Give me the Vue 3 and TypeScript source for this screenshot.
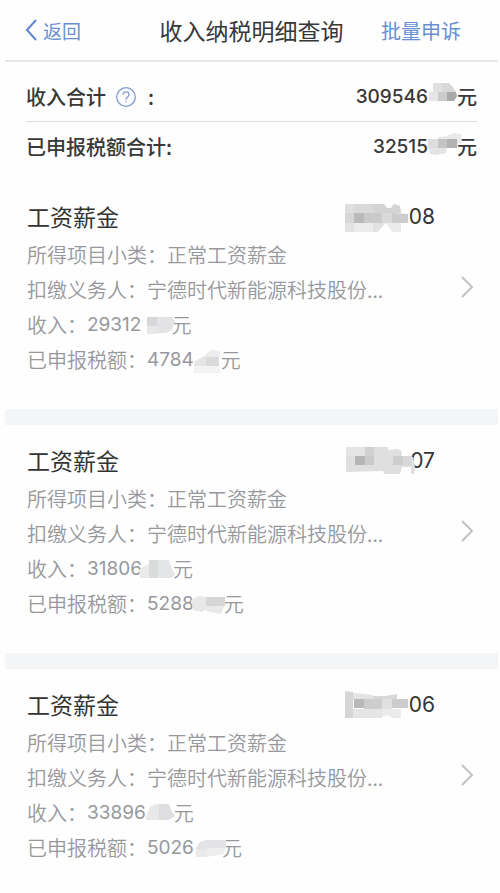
<script setup lang="ts">
type Cell = [points: string, fill: string]

interface Mask {
  width: number
  cells: Cell[]
}

interface Amount {
  digits: string
  mask: Mask
}

interface TaxRecord {
  month: string
  monthMask: Mask
  income: Amount
  tax: Amount
}

const totalIncome: Amount = {
  digits: '309546',
  mask: {
    width: 29,
    cells: [
      ['5,11 14,11 14,20 5,20', '#e0e0e0'],
      ['14,11 21,11 24,14 28,20 14,20', '#d8d8d8'],
      ['1,20 10,20 10,29 1,29', '#e6e6e6'],
      ['10,20 19,20 19,29 10,29', '#cbcbcb'],
      ['19,20 28,20 29,24 26,29 19,29', '#a9a9a9'],
    ],
  },
}

const totalTax: Amount = {
  digits: '32515',
  mask: {
    width: 29,
    cells: [
      ['10,15 19,14 26,11 33,12 34,20 28,24 10,18', '#e9e9e9'],
      ['0,17 10,17 10,26 0,26', '#dddddd'],
      ['10,17 19,17 19,26 10,26', '#c4c4c4'],
      ['19,17 29,17 29,26 19,26', '#b2b2b2'],
      ['1,26 19,26 18,31 8,33 2,32', '#e4e4e4'],
    ],
  },
}

const category = '正常工资薪金'
const employer = '宁德时代新能源科技股份...'

const records: TaxRecord[] = [
  {
    month: '08',
    monthMask: {
      width: 64,
      cells: [
        ['0,8 9,8 9,17 0,17', '#dfdfdf'],
        ['9,8 28,8 28,17 9,17', '#d9d9d9'],
        ['28,8 39,8 42,12 46,12 49,8 55,10 56,17 28,17', '#d3d3d3'],
        ['0,17 9,17 9,27 0,27', '#d6d6d6'],
        ['9,17 19,17 19,27 9,27', '#bababa'],
        ['19,17 37,17 37,27 19,27', '#cacaca'],
        ['37,17 47,17 47,27 37,27', '#dadada'],
        ['47,17 63,18 63,27 47,27', '#cccccc'],
        ['0,27 9,27 9,36 0,36', '#e3e3e3'],
        ['9,27 28,27 28,36 9,36', '#ececec'],
        ['28,27 41,27 37,31 33,36 28,36', '#e2e2e2'],
        ['41,27 56,27 56,36 47,36 44,31', '#eaeaea'],
      ],
    },
    income: {
      digits: '29312',
      mask: {
        width: 30,
        cells: [
          ['6,10 16,10 16,19 6,19', '#d8d8da'],
          ['16,10 31,10 34,14 31,23 25,26 16,26', '#e3e3e5'],
          ['6,19 16,19 16,27 6,27', '#e7e7e9'],
        ],
      },
    },
    tax: {
      digits: '4784',
      mask: {
        width: 27,
        cells: [
          ['0,20 7,16 12,13 12,24 0,24', '#e5e5e6'],
          ['12,12 18,7 26,10 26,15 12,15', '#eeeeef'],
          ['12,15 25,15 25,24 12,24', '#dadadc'],
          ['0,24 26,24 26,31 0,31', '#f3f3f4'],
        ],
      },
    },
  },
  {
    month: '07',
    monthMask: {
      width: 64,
      cells: [
        ['0,7 42,7 42,10 50,9 55,10 56,17 67,17 69,27 68,34 65,34 65,27 56,27 54,34 38,34 37,31 0,32', '#dfdfdf'],
        ['0,7 19,7 19,16 0,16', '#e4e4e4'],
        ['19,7 28,7 28,25 19,25', '#d0d0d0'],
        ['9,16 19,16 19,25 9,25', '#b5b5b5'],
        ['19,16 28,16 28,25 19,25', '#cacaca'],
        ['47,16 57,16 57,25 47,25', '#cdcdcd'],
        ['57,16 65,16 65,25 57,25', '#d8d8d8'],
      ],
    },
    income: {
      digits: '31806',
      mask: {
        width: 31,
        cells: [
          ['-3,19 2,15 7,13 7,27 -2,27', '#eaeaeb'],
          ['7,9 16,9 16,27 7,27', '#dadcdc'],
          ['16,9 27,9 29,15 33,24 29,27 16,27', '#e4e5e6'],
        ],
      },
    },
    tax: {
      digits: '5288',
      mask: {
        width: 30,
        cells: [
          ['-3,14 4,10 12,11 12,23 8,26 -1,24', '#e8e8e9'],
          ['12,11 31,11 31,20 12,20', '#d6d6d8'],
          ['12,20 30,20 27,28 21,27 12,25', '#e9e9ea'],
        ],
      },
    },
  },
  {
    month: '06',
    monthMask: {
      width: 64,
      cells: [
        ['0,7 8,8 8,34 0,34', '#d6d6d6'],
        ['8,9 28,11 28,16 8,16', '#e2e2e2'],
        ['28,12 40,12 52,10 52,15 28,16', '#d8d8d8'],
        ['9,15 19,15 19,24 9,24', '#b9b9b9'],
        ['19,15 37,15 37,25 19,25', '#cdcdcd'],
        ['37,15 47,15 47,25 37,25', '#e0e0e0'],
        ['47,15 63,15 63,24 47,24', '#cccccc'],
        ['8,25 37,25 37,34 8,34', '#e5e5e5'],
        ['37,25 56,25 56,34 47,34 43,31 37,33', '#ebebeb'],
      ],
    },
    income: {
      digits: '33896',
      mask: {
        width: 28,
        cells: [
          ['0,22 4,12 10,9 13,9 13,25 0,25', '#e8e8e9'],
          ['13,9 23,9 25,15 29,21 23,25 13,25', '#dedee0'],
        ],
      },
    },
    tax: {
      digits: '5026',
      mask: {
        width: 28,
        cells: [
          ['2,18 6,12 12,10 32,10 32,18 2,20', '#e3e3e5'],
          ['2,19 12,19 12,27 2,27', '#e9e9ea'],
          ['12,18 32,18 29,24 25,25 12,27', '#ededee'],
        ],
      },
    },
  },
]
</script>

<template>
  <main class="page">
    <header class="nav">
      <button type="button" class="nav-link back">
        <svg class="back-icon" viewBox="0 0 12 22" aria-hidden="true">
          <path d="M11 1 2 11l9 10" />
        </svg>
        <span>返回</span>
      </button>
      <h1>收入纳税明细查询</h1>
      <button type="button" class="nav-link appeal">批量申诉</button>
    </header>

    <section class="summary">
      <div class="total">
        <span class="total-label">
          收入合计
          <button type="button" class="help" aria-label="说明">
            <svg viewBox="0 0 20 20" aria-hidden="true">
              <circle cx="10" cy="10" r="9.3" />
              <path d="M7 7.8C7 5.9 8.2 4.9 10 4.9s3 1.1 3 2.7c0 1.5-.9 2-1.8 2.8-.8.7-1.2 1.2-1.2 2.3" />
              <path d="M10 14.2v1.4" />
            </svg>
          </button>
          <span>:</span>
        </span>
        <span class="amount">
          <span class="digits">{{ totalIncome.digits }}</span>
          <svg class="mask" :width="totalIncome.mask.width" height="49" aria-hidden="true">
            <polygon v-for="(c, i) in totalIncome.mask.cells" :key="i" :points="c[0]" :fill="c[1]" />
          </svg>
          <span>元</span>
        </span>
      </div>
      <div class="total">
        <span class="total-label">已申报税额合计:</span>
        <span class="amount">
          <span class="digits">{{ totalTax.digits }}</span>
          <svg class="mask" :width="totalTax.mask.width" height="49" aria-hidden="true">
            <polygon v-for="(c, i) in totalTax.mask.cells" :key="i" :points="c[0]" :fill="c[1]" />
          </svg>
          <span>元</span>
        </span>
      </div>
    </section>

    <ul class="records">
      <li v-for="record in records" :key="record.month">
        <a href="#" class="record">
          <div class="record-body">
            <div class="record-head">
              <h2>工资薪金</h2>
              <span class="amount">
                <svg class="mask" :width="record.monthMask.width" height="41" aria-hidden="true">
                  <polygon v-for="(c, i) in record.monthMask.cells" :key="i" :points="c[0]" :fill="c[1]" />
                </svg>
                <span class="month">{{ record.month }}</span>
              </span>
            </div>
            <p>所得项目小类：{{ category }}</p>
            <p>扣缴义务人：{{ employer }}</p>
            <p class="amount">
              <span>收入：</span>
              <span class="digits">{{ record.income.digits }}</span>
              <svg class="mask" :width="record.income.mask.width" height="35" aria-hidden="true">
                <polygon v-for="(c, i) in record.income.mask.cells" :key="i" :points="c[0]" :fill="c[1]" />
              </svg>
              <span>元</span>
            </p>
            <p class="amount">
              <span>已申报税额：</span>
              <span class="digits">{{ record.tax.digits }}</span>
              <svg class="mask" :width="record.tax.mask.width" height="35" aria-hidden="true">
                <polygon v-for="(c, i) in record.tax.mask.cells" :key="i" :points="c[0]" :fill="c[1]" />
              </svg>
              <span>元</span>
            </p>
          </div>
          <svg class="chevron" viewBox="0 0 12 22" aria-hidden="true">
            <path d="M1 1l10 10L1 21" />
          </svg>
        </a>
      </li>
    </ul>
  </main>
</template>

<style>
body {
  margin: 0;
  background: #fefefe;
}
</style>

<style scoped>
.page {
  padding: 0 2px 0 5px;
  overflow: hidden;
  font-family: "Noto Sans CJK SC", sans-serif;
  color: #383838;
}

button {
  padding: 0;
  border: 0;
  background: none;
  font: inherit;
  cursor: pointer;
}

h1,
h2,
p,
ul {
  margin: 0;
  padding: 0;
  font-weight: 400;
}

.nav {
  display: grid;
  grid-template-columns: 1fr auto 1fr;
  align-items: center;
  height: 60px;
  border-bottom: 2px solid #e6e6e6;
}

.nav h1 {
  font-size: 23px;
  line-height: 60px;
}

.nav-link {
  color: #6890d3;
  font-size: 20px;
}

.back {
  display: flex;
  align-items: center;
  gap: 6px;
  padding-left: 20px;
  font-size: 19px;
}

.back-icon {
  width: 12px;
  height: 22px;
  fill: none;
  stroke: #5b86cf;
  stroke-width: 2;
}

.appeal {
  justify-self: end;
  padding-right: 37px;
}

.summary {
  padding: 10px 21px;
}

.total {
  display: flex;
  justify-content: space-between;
  height: 49px;
  font-size: 20px;
  font-weight: 500;
  line-height: 49px;
}

.total + .total {
  border-top: 1px solid #dedede;
}

.total-label {
  display: flex;
  align-items: center;
}

.help {
  width: 20px;
  height: 20px;
  margin: 0 12px 0 10px;
}

.help svg {
  display: block;
  fill: none;
  stroke: #7f9bd0;
  stroke-width: 1.3;
}

.amount {
  display: flex;
}

.mask {
  position: relative;
  flex: none;
  overflow: visible;
}

.digits {
  font-family: Inter, sans-serif;
  font-size: 19px;
}

.records {
  list-style: none;
}

.records li + li {
  border-top: 16px solid #f4f5f6;
}

.record {
  display: flex;
  align-items: center;
  gap: 26px;
  padding: 15px 25px 32px 22px;
  color: #97989c;
  text-decoration: none;
}

.record-body {
  flex: 1;
  min-width: 0;
  font-size: 20px;
  line-height: 35px;
}

.record-body p {
  font-weight: 350;
}

.record-body .digits {
  font-weight: 400;
}

.record-head {
  display: flex;
  justify-content: space-between;
  color: #333;
  line-height: 41px;
}

.record-head h2 {
  font-size: 23px;
}

.month {
  font-family: Inter, sans-serif;
  font-size: 21px;
}

.chevron {
  width: 12px;
  height: 22px;
  fill: none;
  stroke: #c2c2c4;
  stroke-width: 2;
}
</style>
